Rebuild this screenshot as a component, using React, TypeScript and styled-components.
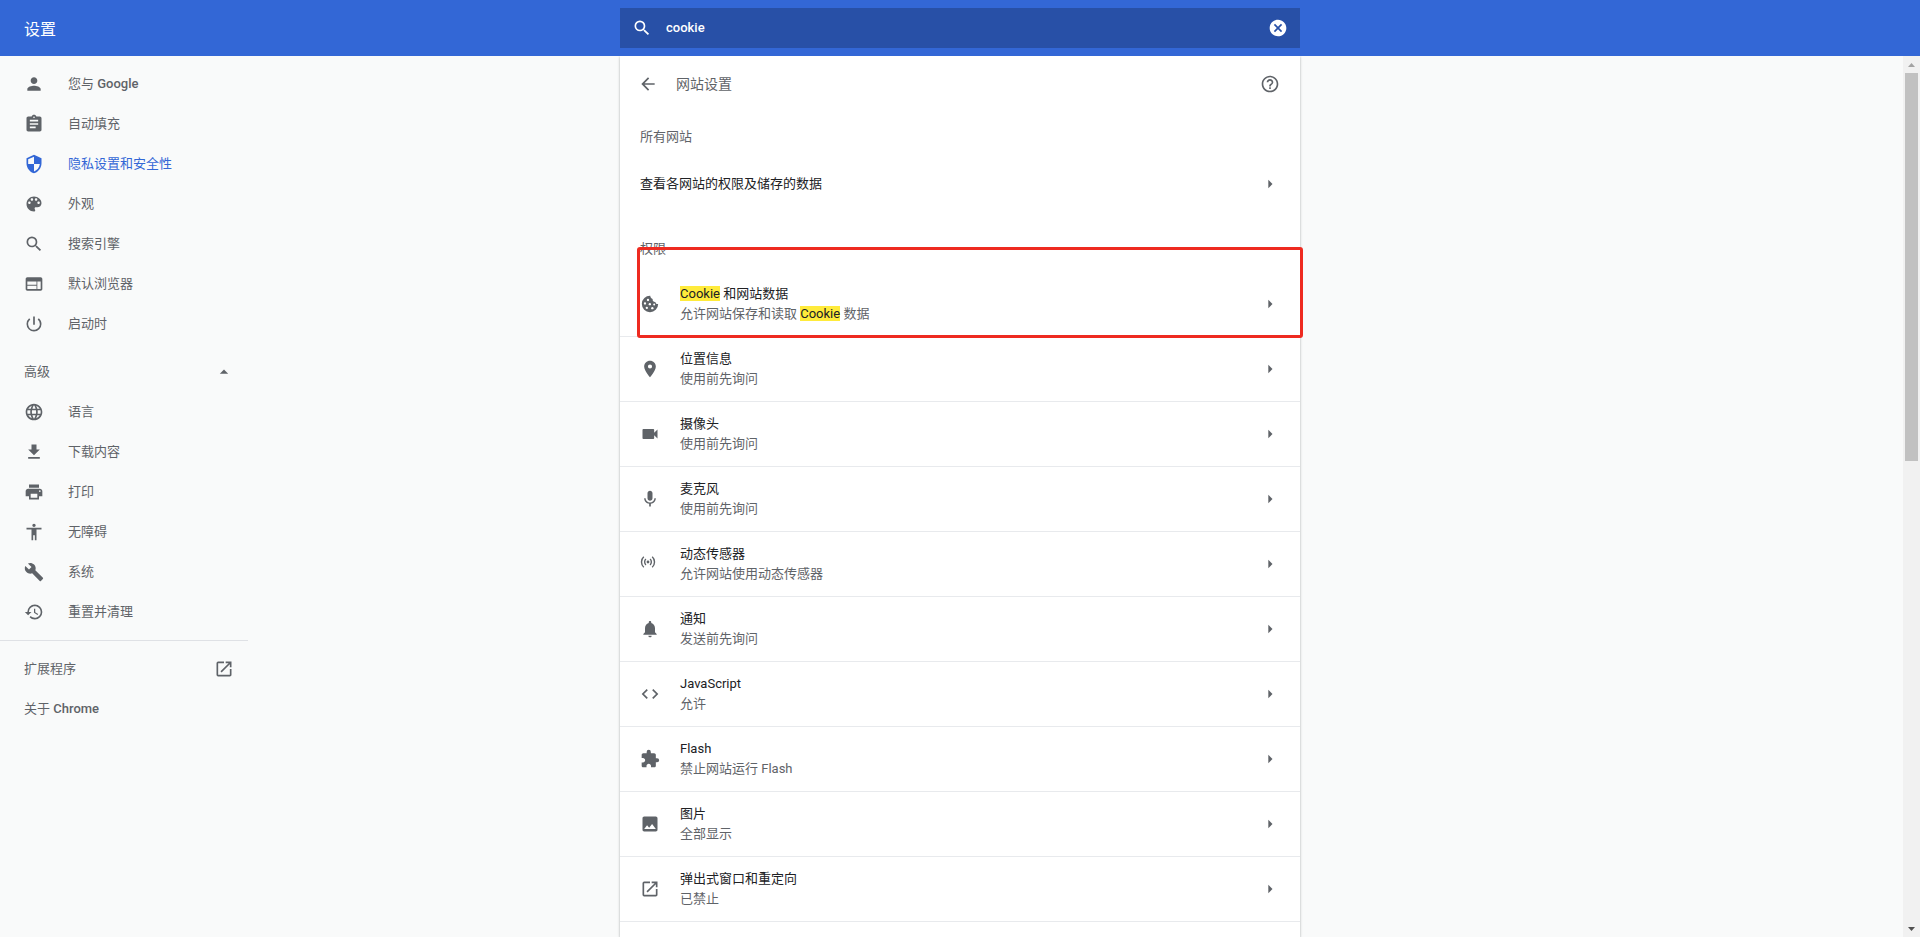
import React, { useState } from 'react';
import styled, { createGlobalStyle } from 'styled-components';
import {
  MdPerson, MdAssignment, MdSearch, MdWeb, MdPowerSettingsNew,
  MdArrowDropUp, MdArrowRight, MdLanguage, MdPrint, MdAccessibility, MdRestore,
  MdLaunch, MdLocationOn, MdVideocam, MdMic, MdNotifications, MdCode, MdExtension,
  MdImage, MdCancel, MdHelpOutline, MdArrowBack,
} from 'react-icons/md';

const GlobalStyle = createGlobalStyle`
  * { box-sizing: border-box; }
  html, body, #root { height: 100%; }
  body {
    margin: 0;
    overflow: hidden;
    background: #f9fafa;
    color: #202124;
    font-family: Roboto, 'Noto Sans CJK SC', sans-serif;
    font-size: 13px;
    line-height: 20px;
  }
  svg { display: block; flex: none; }
  a { color: inherit; text-decoration: none; }
  button { border: 0; padding: 0; background: none; color: inherit; font: inherit; cursor: pointer; }
`;

const Page = styled.div`
  height: 100vh;
  display: flex;
  flex-direction: column;
`;

const TopBar = styled.header`
  flex: none;
  height: 56px;
  display: grid;
  grid-template-columns: 1fr minmax(0, 680px) 1fr;
  align-items: center;
  background: #3367d6;
  color: #fff;
`;

const BrandTitle = styled.h1`
  margin: 0;
  padding: 4px 24px 0;
  font-size: 16px;
  font-weight: 400;
`;

const SearchBox = styled.label`
  height: 40px;
  display: flex;
  align-items: center;
  padding: 0 12px;
  background: #2850a7;
`;

const SearchInput = styled.input`
  flex: 1;
  min-width: 0;
  margin-left: 14px;
  padding: 0;
  border: 0;
  outline: 0;
  background: transparent;
  color: #fff;
  font: 500 13px/20px Roboto, 'Noto Sans CJK SC', sans-serif;
`;

const Body = styled.div`
  flex: 1;
  min-height: 0;
  display: flex;
  overflow: hidden;
`;

const Columns = styled.div`
  flex: 1;
  min-width: 0;
  display: grid;
  grid-template-columns: 1fr minmax(0, 680px) 1fr;
  margin-right: -17px;
`;

const Sidebar = styled.nav`
  width: 248px;
  padding-top: 8px;
  color: #5f6368;
`;

const NavLink = styled.a<{ $active?: boolean }>`
  height: 40px;
  display: flex;
  align-items: center;
  gap: 24px;
  padding-left: 24px;
  color: ${p => (p.$active ? '#3367d6' : 'inherit')};
`;

const NavText = styled.span`
  padding-bottom: 1px;
`;

const ProductName = styled.span`
  font-weight: 500;
`;

const WideNavLink = styled(NavLink)`
  justify-content: space-between;
  padding-right: 14px;
`;

const AdvancedToggle = styled.button`
  width: 100%;
  height: 40px;
  display: flex;
  align-items: center;
  justify-content: space-between;
  margin-top: 8px;
  padding: 0 14px 0 24px;
`;

const Divider = styled.hr`
  height: 1px;
  margin: 8px 0;
  border: 0;
  background: #dfe1e5;
`;

const Card = styled.main`
  min-height: 0;
  background: #fff;
  box-shadow: 0 1px 2px rgba(60, 64, 67, 0.3), 0 1px 3px rgba(60, 64, 67, 0.15);
`;

const CardHeader = styled.div`
  height: 56px;
  display: flex;
  align-items: center;
  padding: 0 20px 0 18px;
  color: #5f6368;
`;

const CardTitle = styled.h2`
  flex: 1;
  margin: 0 0 0 18px;
  font-size: 14px;
  font-weight: 400;
`;

const SectionLabel = styled.h3`
  height: 48px;
  margin: 0;
  padding: 15px 20px 0;
  color: #5f6368;
  font-size: 13px;
  font-weight: 400;
`;

const PlainRow = styled.a`
  height: 48px;
  display: flex;
  align-items: center;
  justify-content: space-between;
  margin-bottom: 16px;
  padding: 0 20px;
`;

const PermissionArea = styled.section`
  position: relative;
`;

const PermissionRow = styled.a`
  height: 65px;
  display: flex;
  align-items: center;
  padding: 0 20px;
  border-bottom: 1px solid #e8eaed;
  color: #5f6368;
`;

const RowText = styled.span`
  flex: 1;
  margin-left: 20px;
`;

const RowTitle = styled.span`
  display: block;
  color: #202124;
`;

const RowDetail = styled.span`
  display: block;
`;

const Hit = styled.mark`
  background: #ffeb3b;
  color: #202124;
`;

const SensorSlot = styled.span`
  width: 20px;
  height: 20px;
`;

const Outline = styled.div`
  position: absolute;
  top: 23px;
  left: 17px;
  right: -3px;
  height: 91px;
  border: 3px solid #ee2a20;
  border-radius: 3px;
  pointer-events: none;
`;

const ScrollTrack = styled.div`
  position: relative;
  flex: none;
  width: 17px;
  display: flex;
  flex-direction: column;
  align-items: center;
  background: #f1f1f1;
`;

const ScrollStep = styled.button<{ $dim?: boolean }>`
  width: 17px;
  height: 17px;
  display: flex;
  align-items: center;
  justify-content: center;
  color: ${p => (p.$dim ? '#a3a3a3' : '#505050')};
`;

const ScrollThumb = styled.div`
  width: 13px;
  height: 44%;
  background: #c1c1c1;
`;

const ScrollSpace = styled.div`
  flex: 1;
`;

type IconType = React.ComponentType<{ size?: number }>;

const glyph = (d: string): IconType => ({ size = 20 }) => (
  <svg width={size} height={size} viewBox="0 0 24 24" fill="currentColor" aria-hidden="true">
    <path d={d} />
  </svg>
);

const Download = glyph('M19 9h-4V3H9v6H5l7 7 7-7zM5 18v2h14v-2H5z');
const Shield = glyph(
  'M12 1L3 5v6c0 5.55 3.84 10.74 9 12 5.16-1.26 9-6.45 9-12V5l-9-4zm0 10.99h7c-.53 4.12-3.28 7.79-7 8.94V12H5V6.3l7-3.11v8.8z',
);
const Palette = glyph(
  'M12 3c-4.97 0-9 4.03-9 9s4.03 9 9 9c.83 0 1.5-.67 1.5-1.5 0-.39-.15-.74-.39-1.01-.23-.26-.38-.61-.38-.99 0-.83.67-1.5 1.5-1.5H16c2.76 0 5-2.24 5-5 0-4.42-4.03-8-9-8zm-5.5 9c-.83 0-1.5-.67-1.5-1.5S5.67 9 6.5 9 8 9.67 8 10.5 7.33 12 6.5 12zm3-4C8.67 8 8 7.33 8 6.5S8.67 5 9.5 5s1.500.67 1.500 1.500S10.330 8 9.500 8zm5 0c-.83 0-1.500-.67-1.500-1.500S13.670 5 14.500 5s1.500.67 1.500 1.500S15.330 8 14.500 8zm3 4c-.83 0-1.500-.67-1.500-1.500S16.670 9 17.500 9s1.500.67 1.500 1.500-.67 1.500-1.500 1.500z',
);
const Wrench = glyph(
  'M22.7 19l-9.1-9.1c.9-2.3.4-5-1.5-6.9-2-2-5-2.4-7.4-1.3L9 6 6 9 1.6 4.7C.4 7.1.9 10.1 2.9 12.1c1.9 1.9 4.6 2.4 6.9 1.5l9.1 9.1c.4.4 1 .4 1.4 0l2.3-2.3c.5-.4.5-1.1.1-1.4z',
);

const Cookie: IconType = ({ size = 20 }) => (
  <svg width={size} height={size} viewBox="0 0 24 24" fill="currentColor" aria-hidden="true">
    <path d="M12.3 2.2A9.8 9.8 0 1 0 21.8 12c-1.9.4-3.2-.7-3.3-2.5-2.300.2-3.800-1.300-3.300-3.500-1.800-.4-2.700-1.800-2.900-3.800z" />
    <g fill="#fff">
      <circle cx="9.6" cy="7.2" r="1.4" />
      <circle cx="6" cy="11.4" r="1.4" />
      <circle cx="11.8" cy="12.2" r="1.4" />
      <circle cx="8.2" cy="16.6" r="1.4" />
      <circle cx="14.8" cy="17" r="1.4" />
      <circle cx="17" cy="12.600" r="1.2" />
    </g>
  </svg>
);

const Sensor: IconType = () => (
  <SensorSlot>
    <svg width="16" height="18" viewBox="0 0 16 18" fill="none" stroke="currentColor" strokeWidth="1.4" aria-hidden="true">
      <circle cx="8" cy="8" r="1.4" fill="currentColor" stroke="none" />
      <path d="M5.9 5.1a4 4 0 0 0 0 5.8M10.1 5.1a4 4 0 0 1 0 5.8M3.8 2.8a7 7 0 0 0 0 10.4M12.2 2.8a7 7 0 0 1 0 10.4" />
    </svg>
  </SensorSlot>
);

type NavEntry = { icon: IconType; label: string; product?: string; active?: boolean };

const basics: NavEntry[] = [
  { icon: MdPerson, label: '您与 ', product: 'Google' },
  { icon: MdAssignment, label: '自动填充' },
  { icon: Shield, label: '隐私设置和安全性', active: true },
  { icon: Palette, label: '外观' },
  { icon: MdSearch, label: '搜索引擎' },
  { icon: MdWeb, label: '默认浏览器' },
  { icon: MdPowerSettingsNew, label: '启动时' },
];

const advanced: NavEntry[] = [
  { icon: MdLanguage, label: '语言' },
  { icon: Download, label: '下载内容' },
  { icon: MdPrint, label: '打印' },
  { icon: MdAccessibility, label: '无障碍' },
  { icon: Wrench, label: '系统' },
  { icon: MdRestore, label: '重置并清理' },
];

const permissions: { icon: IconType; title: string; detail: string }[] = [
  { icon: Cookie, title: 'Cookie 和网站数据', detail: '允许网站保存和读取 Cookie 数据' },
  { icon: MdLocationOn, title: '位置信息', detail: '使用前先询问' },
  { icon: MdVideocam, title: '摄像头', detail: '使用前先询问' },
  { icon: MdMic, title: '麦克风', detail: '使用前先询问' },
  { icon: Sensor, title: '动态传感器', detail: '允许网站使用动态传感器' },
  { icon: MdNotifications, title: '通知', detail: '发送前先询问' },
  { icon: MdCode, title: 'JavaScript', detail: '允许' },
  { icon: MdExtension, title: 'Flash', detail: '禁止网站运行 Flash' },
  { icon: MdImage, title: '图片', detail: '全部显示' },
  { icon: MdLaunch, title: '弹出式窗口和重定向', detail: '已禁止' },
];

function Highlighted({ text, query }: { text: string; query: string }) {
  const at = query ? text.toLowerCase().indexOf(query.toLowerCase()) : -1;
  if (at < 0) return <>{text}</>;
  return (
    <>
      {text.slice(0, at)}
      <Hit>{text.slice(at, at + query.length)}</Hit>
      {text.slice(at + query.length)}
    </>
  );
}

function NavItem({ icon: Icon, label, product, active }: NavEntry) {
  return (
    <NavLink href="#" $active={active} aria-current={active ? 'page' : undefined}>
      <Icon size={20} />
      <NavText>
        {label}
        {product && <ProductName>{product}</ProductName>}
      </NavText>
    </NavLink>
  );
}

export default function App() {
  const [query, setQuery] = useState('cookie');
  const [open, setOpen] = useState(true);

  return (
    <Page>
      <GlobalStyle />
      <TopBar>
        <BrandTitle>设置</BrandTitle>
        <SearchBox>
          <MdSearch size={20} />
          <SearchInput aria-label="搜索设置" value={query} onChange={e => setQuery(e.target.value)} />
          <button type="button" aria-label="清除搜索" onClick={() => setQuery('')}>
            <MdCancel size={20} />
          </button>
        </SearchBox>
      </TopBar>
      <Body>
        <Columns>
          <Sidebar>
            {basics.map(item => <NavItem key={item.label} {...item} />)}
            <AdvancedToggle type="button" aria-expanded={open} onClick={() => setOpen(!open)}>
              <NavText>高级</NavText>
              <MdArrowDropUp size={20} />
            </AdvancedToggle>
            {open && advanced.map(item => <NavItem key={item.label} {...item} />)}
            <Divider />
            <WideNavLink href="#">
              <NavText>扩展程序</NavText>
              <MdLaunch size={20} />
            </WideNavLink>
            <WideNavLink href="#">
              <NavText>关于 <ProductName>Chrome</ProductName></NavText>
            </WideNavLink>
          </Sidebar>
          <Card>
            <CardHeader>
              <button type="button" aria-label="返回"><MdArrowBack size={20} /></button>
              <CardTitle>网站设置</CardTitle>
              <button type="button" aria-label="帮助"><MdHelpOutline size={20} /></button>
            </CardHeader>
            <SectionLabel>所有网站</SectionLabel>
            <PlainRow href="#">
              <NavText>查看各网站的权限及储存的数据</NavText>
              <MdArrowRight size={20} color="#5f6368" />
            </PlainRow>
            <PermissionArea>
              <SectionLabel>权限</SectionLabel>
              {permissions.map(({ icon: Icon, title, detail }) => (
                <PermissionRow href="#" key={title}>
                  <Icon size={20} />
                  <RowText>
                    <RowTitle><Highlighted text={title} query={query} /></RowTitle>
                    <RowDetail><Highlighted text={detail} query={query} /></RowDetail>
                  </RowText>
                  <MdArrowRight size={20} />
                </PermissionRow>
              ))}
              <Outline />
            </PermissionArea>
          </Card>
        </Columns>
        <ScrollTrack>
          <ScrollStep type="button" aria-label="向上滚动" $dim>
            <svg width="7" height="4" viewBox="0 0 7 4" fill="currentColor"><path d="M0 4l3.500-4 3.500 4z" /></svg>
          </ScrollStep>
          <ScrollThumb />
          <ScrollSpace />
          <ScrollStep type="button" aria-label="向下滚动">
            <svg width="7" height="4" viewBox="0 0 7 4" fill="currentColor"><path d="M0 0l3.500 4 3.500-4z" /></svg>
          </ScrollStep>
        </ScrollTrack>
      </Body>
    </Page>
  );
}
